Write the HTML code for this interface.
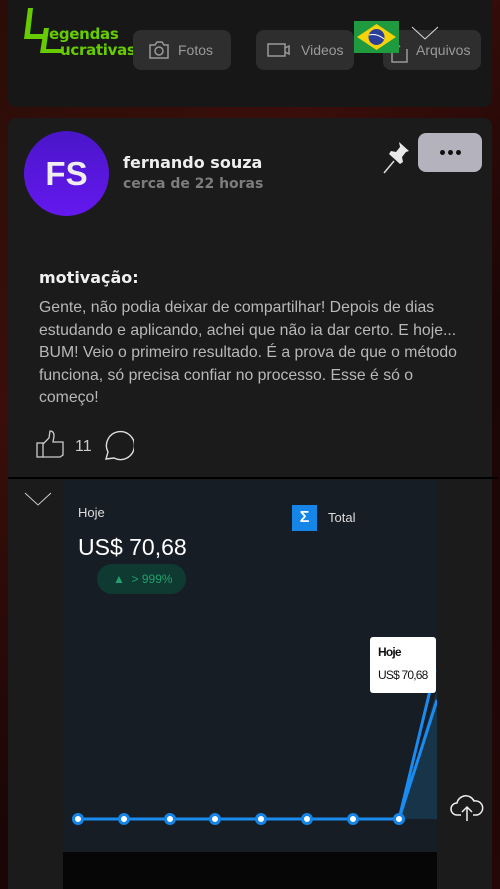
<!DOCTYPE html>
<html><head><meta charset="utf-8"><style>
*{margin:0;padding:0;box-sizing:border-box}
body{width:500px;height:889px;overflow:hidden;background:linear-gradient(135deg,#2a0d08 0%,#3a0e0a 30%,#1a0606 60%,#240707 100%);font-family:"Liberation Sans",sans-serif;position:relative}
.c1{position:absolute;left:8px;top:0;width:484px;height:107px;background:#171717;border-radius:0 0 8px 8px}
.c2{position:absolute;left:8px;top:118px;width:484px;height:771px;background:#1b1b1b;border-radius:8px 8px 0 0}
.btn{position:absolute;top:30px;height:40px;background:#2e2e2e;border-radius:8px;color:#9a9a9a;font-size:14px;line-height:40px}
.abs{position:absolute}
</style></head><body>
<div class="c1"></div>
<svg class="abs" style="left:24px;top:8px" width="40" height="50" viewBox="0 0 40 50" fill="#66cc00"><path d="M4 0h5L6 26h14v5H0z"/><path d="M20 20h5l-3 21h17v4H16z"/></svg>
<div class="abs" style="left:49px;top:26px;color:#66cc00;font-weight:bold;font-size:15px;line-height:16px;font-family:'DejaVu Sans',sans-serif;letter-spacing:-0.3px">egendas<br><span style="margin-left:11px">ucrativas</span></div>
<div class="btn" style="left:133px;width:98px"><svg class="abs" style="left:15px;top:11px" width="22" height="18" viewBox="0 0 22 18" fill="none" stroke="#9a9a9a" stroke-width="1.5"><path d="M2 4h5l2-3h5l2 3h4v13H2z"/><circle cx="11" cy="10" r="4"/></svg><span style="margin-left:45px">Fotos</span></div>
<div class="btn" style="left:256px;width:98px"><svg class="abs" style="left:11px;top:13px" width="24" height="14" viewBox="0 0 24 14" fill="none" stroke="#9a9a9a" stroke-width="1.5"><rect x="1" y="1" width="17" height="12"/><path d="M18 5l4-2v8l-4-2"/></svg><span style="margin-left:45px">Videos</span></div>
<div class="btn" style="left:383px;width:98px"><svg class="abs" style="left:8px;top:13px" width="18" height="20" viewBox="0 0 18 20" fill="none" stroke="#9a9a9a" stroke-width="1.5"><path d="M1 6v13h15V6M6 1l3 3"/></svg><span style="margin-left:33px">Arquivos</span></div>
<svg class="abs" style="left:354px;top:21px" width="45" height="32" viewBox="0 0 45 32"><rect width="45" height="32" fill="#1f9a3e"/><path d="M22.5 3L42 16 22.5 29 3 16z" fill="#f5d20a"/><circle cx="22.5" cy="16" r="8" fill="#2a3e9a"/><path d="M15 14q8-2 15 4" stroke="#fff" stroke-width="1" fill="none"/></svg>
<svg class="abs" style="left:411px;top:26px" width="28" height="14"><path d="M1 1l13 12L27 1" stroke="#ddd" fill="none" stroke-width="1"/></svg>

<div class="c2"></div>
<div class="abs" style="left:24px;top:131px;width:85px;height:85px;border-radius:50%;background:linear-gradient(#4a16c9,#6418ee);color:#eee;font-size:33px;font-weight:bold;text-align:center;line-height:85px">FS</div>
<div class="abs" style="left:123px;top:153px;color:#eee;font-weight:bold;font-size:16px;font-family:'DejaVu Sans',sans-serif">fernando souza</div>
<div class="abs" style="left:123px;top:176px;color:#7d7d7d;font-weight:bold;font-size:14px;font-family:'DejaVu Sans',sans-serif">cerca de 22 horas</div>
<svg class="abs" style="left:382px;top:140px" width="30" height="34" viewBox="0 0 30 34"><path d="M2 33l10-12" stroke="#ddd" stroke-width="1.5"/><path d="M17 2l10 9-3 1-4 5 1 5-3 2-11-10 2-3 5 1 4-5z" fill="#e8e8e8"/></svg>
<div class="abs" style="left:418px;top:133px;width:64px;height:39px;border-radius:8px;background:#b4b2bc;text-align:center"><span style="display:inline-block;margin-top:17px;width:5px;height:5px;border-radius:50%;background:#111;box-shadow:-8px 0 #111,8px 0 #111"></span></div>
<div class="abs" style="left:39px;top:268px;color:#f0f0f0;font-weight:bold;font-size:16px;font-family:'DejaVu Sans',sans-serif">motivação:</div>
<div class="abs" style="left:39px;top:297px;width:425px;color:#b8b8b8;font-size:15.8px;line-height:22.6px">Gente, não podia deixar de compartilhar! Depois de dias estudando e aplicando, achei que não ia dar certo. E hoje... BUM! Veio o primeiro resultado. É a prova de que o método funciona, só precisa confiar no processo. Esse é só o começo!</div>
<svg class="abs" style="left:36px;top:430px" width="30" height="29" viewBox="0 0 30 29" fill="none" stroke="#ccc" stroke-width="1.3"><rect x="1" y="13" width="6" height="14"/><path d="M7 14l6-6 1-7q4 0 4 5l-1 6h10v13l-3 2H7"/></svg>
<div class="abs" style="left:75px;top:438px;color:#ccc;font-size:16px">11</div>
<svg class="abs" style="left:101px;top:429px" width="33" height="32" viewBox="0 0 33 32" fill="none" stroke="#ddd" stroke-width="1.4"><path d="M5 30l2-7A14 14 0 1 1 13 29z"/></svg>
<div class="abs" style="left:8px;top:477px;width:490px;height:2px;background:#000"></div>
<svg class="abs" style="left:24px;top:492px" width="28" height="14"><path d="M1 1l13 12L27 1" stroke="#ccc" fill="none" stroke-width="1"/></svg>
<div class="abs" style="left:63px;top:480px;width:374px;height:372px;background:#171d25;overflow:hidden">
<div class="abs" style="left:15px;top:25px;color:#ddd;font-size:13px">Hoje</div>
<div class="abs" style="left:15px;top:54px;color:#fff;font-size:23px">US$ 70,68</div>
<div class="abs" style="left:34px;top:84px;width:89px;height:30px;border-radius:15px;background:#0f3a32;color:#22a06b;font-size:12px;line-height:30px;padding-left:16px">▲ &nbsp;&gt; 999%</div>
<div class="abs" style="left:229px;top:25px;width:25px;height:26px;background:#1585e8;color:#fff;font-weight:bold;text-align:center;line-height:26px;font-size:16px">Σ</div>
<div class="abs" style="left:265px;top:30px;color:#ddd;font-size:13px">Total</div>
<svg class="abs" style="left:0;top:0" width="374" height="372"><path d="M336 339L374 210V339z" fill="#173448"/><path d="M336 339L372 190M15 339H336L374 220" stroke="#1a8bf0" stroke-width="3" fill="none"/>
<g fill="#fff" stroke="#1585e8" stroke-width="3"><circle cx="15" cy="339" r="4.5"/><circle cx="61" cy="339" r="4.5"/><circle cx="107" cy="339" r="4.5"/><circle cx="152" cy="339" r="4.5"/><circle cx="198" cy="339" r="4.5"/><circle cx="244" cy="339" r="4.5"/><circle cx="290" cy="339" r="4.5"/><circle cx="336" cy="339" r="4.5"/></g></svg>
<div class="abs" style="left:307px;top:157px;width:66px;height:56px;background:#fff;border-radius:3px;color:#111;font-size:12px;padding:8px 0 0 8px;letter-spacing:-0.8px"><b>Hoje</b><br><div style="margin-top:9px">US$ 70,68</div></div>
</div>
<div class="abs" style="left:63px;top:852px;width:374px;height:37px;background:#060606"></div>
<svg class="abs" style="left:450px;top:795px" width="34" height="28" viewBox="0 0 34 28" fill="none" stroke="#eee" stroke-width="1.5"><path d="M11 20H7a6 6 0 0 1 0-12 9 9 0 0 1 17-2 7 7 0 0 1 3 14h-4M17 26V13M12 17l5-5 5 5"/></svg>
</body></html>
